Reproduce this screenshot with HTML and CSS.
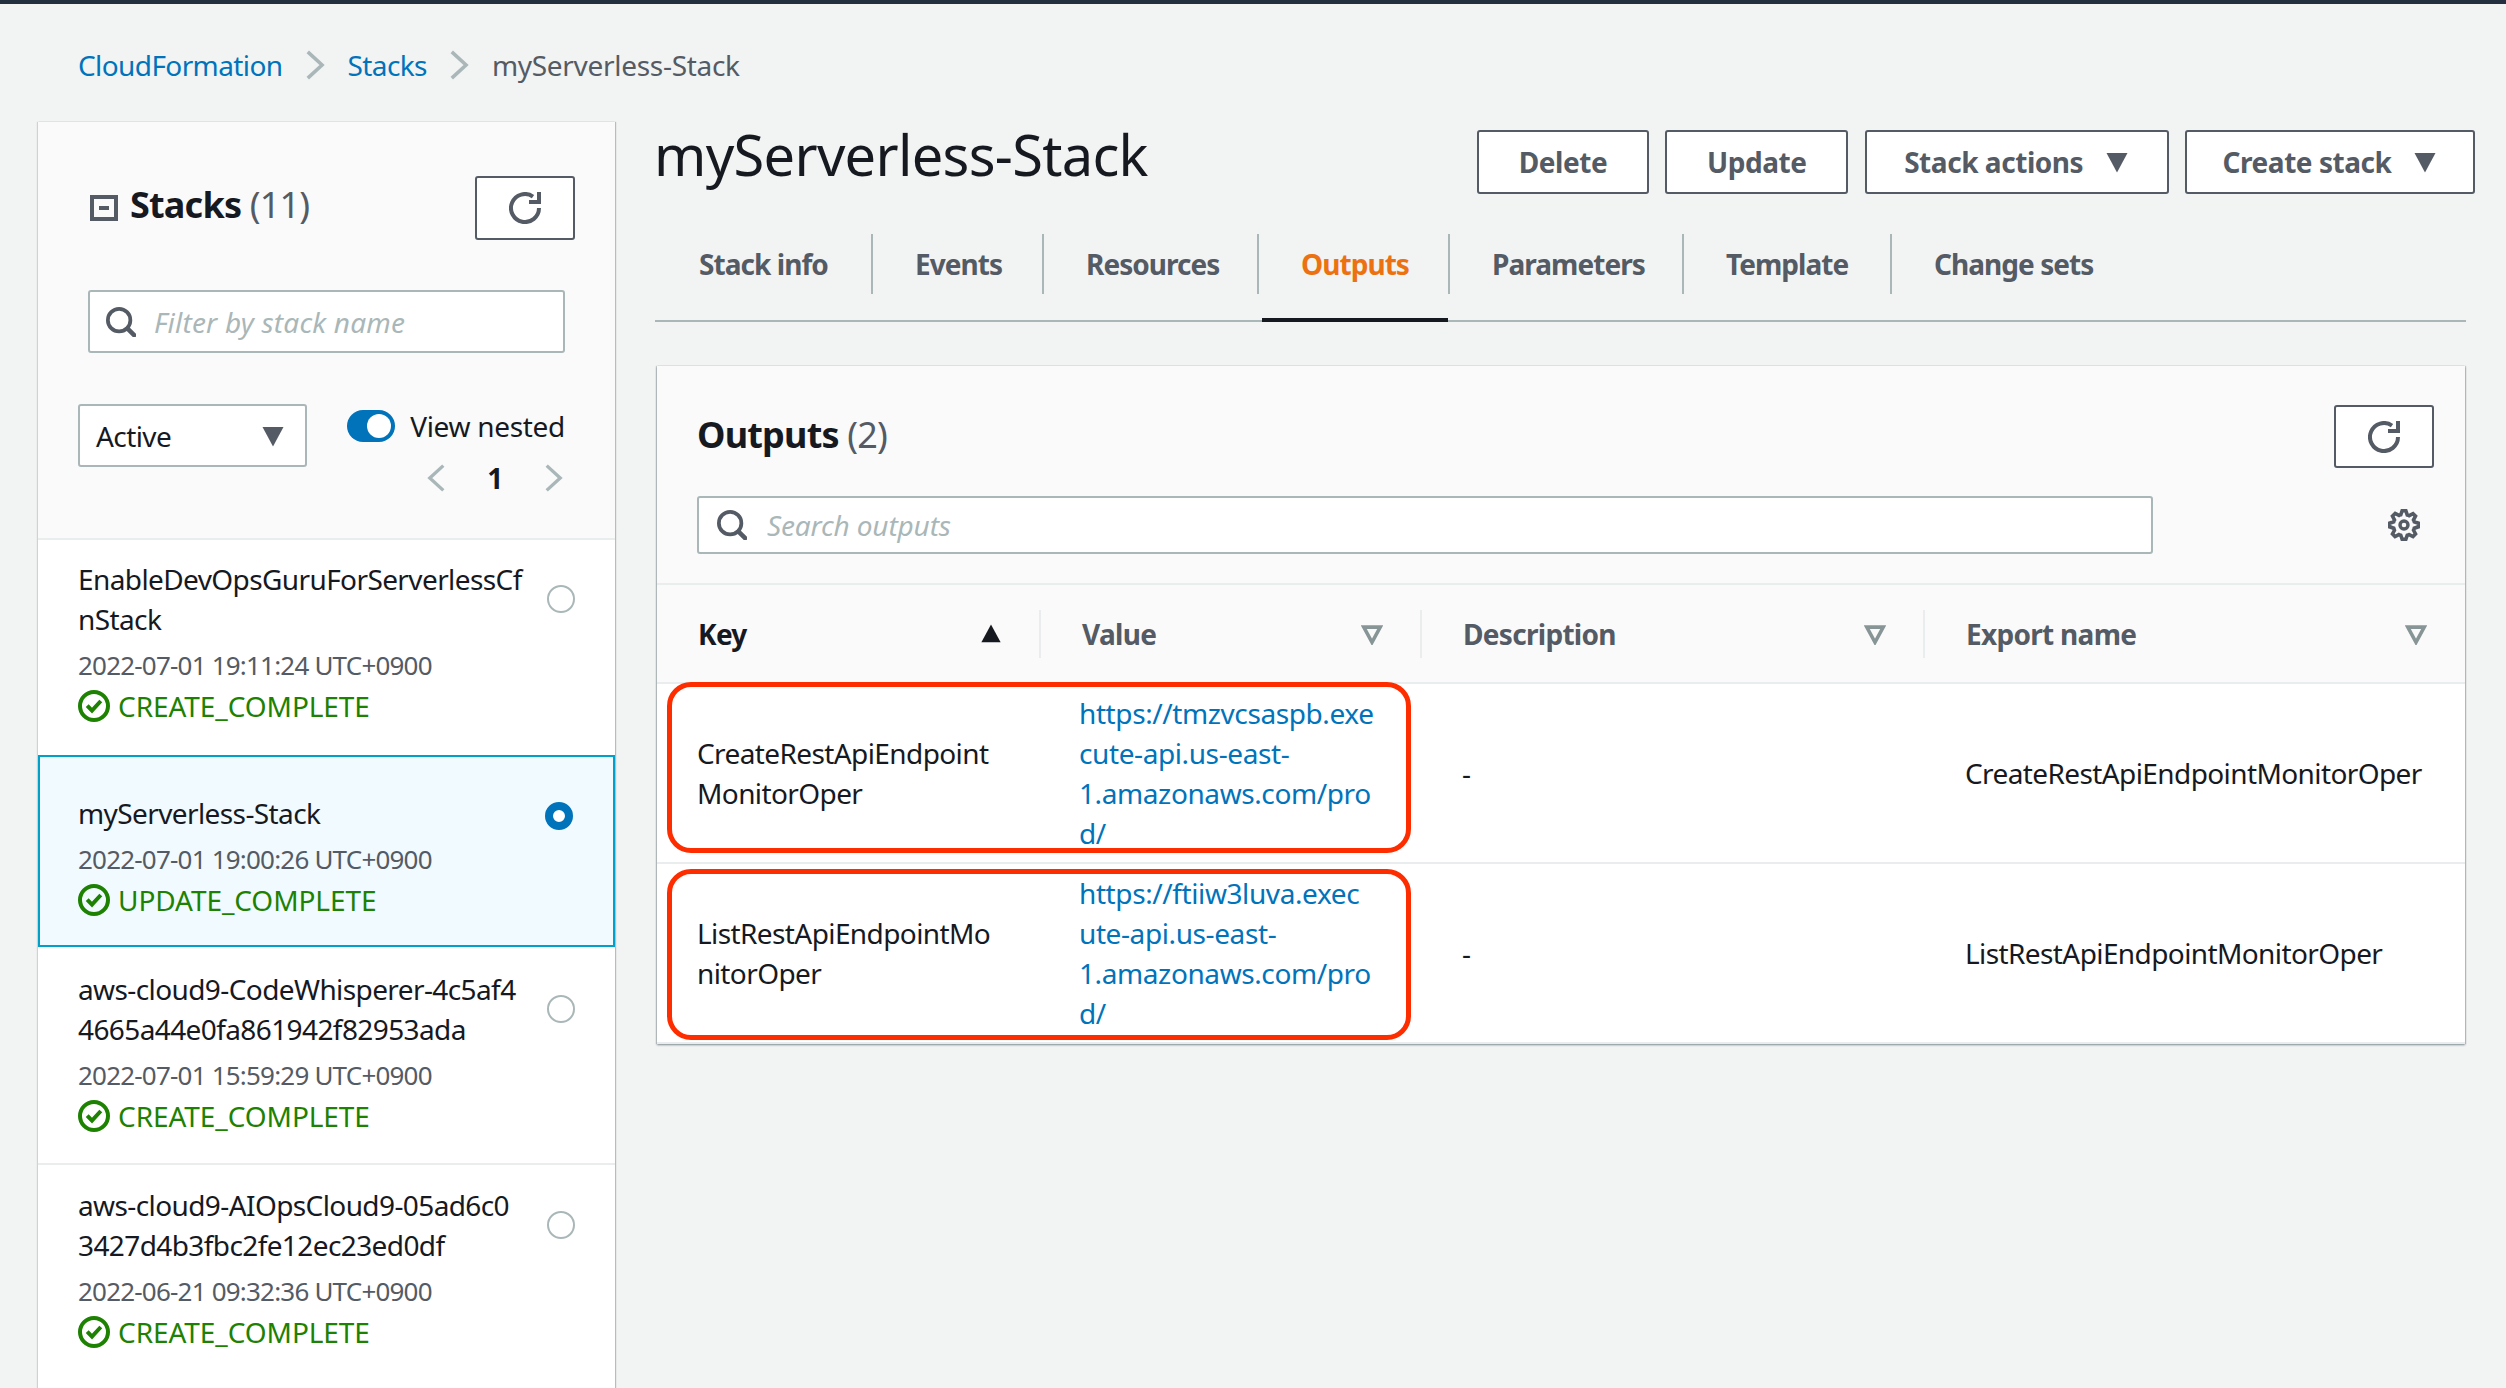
FILE: index.html
```html
<!DOCTYPE html>
<html lang="en">
<head>
    <meta charset="UTF-8">
    <meta name="viewport" content="width=device-width, initial-scale=1.0">
    <title>myServerless-Stack</title>
    <link rel="stylesheet" href="styles.css">
</head>
<body>

<svg class="defs" width="0" height="0">
    <symbol id="i-refresh" viewBox="0 0 16 16"><path d="M10 5h5V0M15 8a7 7 0 1 1-3-5.73" fill="none" stroke="currentColor" stroke-width="2"/></symbol>
    <symbol id="i-search" viewBox="0 0 16 16"><circle cx="7" cy="7" r="6" fill="none" stroke="currentColor" stroke-width="2"/><path d="M11.5 11.5L15 15" fill="none" stroke="currentColor" stroke-width="2.4" stroke-linecap="round"/></symbol>
    <symbol id="i-gear" viewBox="0 0 16 16"><path d="M13.3 5.2l1.1-2.1L13 1.7l-2.1 1.1c-.3-.2-.7-.3-1.1-.4L9 0H7l-.8 2.3c-.3.1-.7.2-1 .4L3.1 1.6 1.6 3.1l1.1 2.1c-.2.3-.3.7-.4 1L0 7v2l2.3.8c.1.4.3.7.4 1.1l-1.1 2.1 1.4 1.4 2.1-1.1c.3.2.7.3 1.1.4L7 16h2l.8-2.3c.4-.1.7-.3 1.1-.4l2.1 1.1 1.4-1.4-1.1-2.1c.2-.3.3-.7.4-1.1L16 9V7l-2.3-.8c-.1-.3-.2-.7-.4-1z" fill="none" stroke="currentColor" stroke-width="2" transform="translate(.8 .8) scale(.9)"/><circle cx="8" cy="8" r="2" fill="none" stroke="currentColor" stroke-width="1.7"/></symbol>
    <symbol id="i-check" viewBox="0 0 16 16"><circle cx="8" cy="8" r="7" fill="none" stroke="currentColor" stroke-width="2"/><path d="M4.6 7.8l2.4 2.5 4.4-4.8" fill="none" stroke="currentColor" stroke-width="2"/></symbol>
    <symbol id="i-caret" viewBox="0 0 16 16"><path d="M1 2h14L8 15z" fill="currentColor"/></symbol>
    <symbol id="i-chev-right" viewBox="0 0 16 24"><path d="M1.5 1l12 11-12 11" fill="none" stroke="currentColor" stroke-width="3"/></symbol>
    <symbol id="i-chev-left" viewBox="0 0 16 24"><path d="M14.5 1l-12 11 12 11" fill="none" stroke="currentColor" stroke-width="3"/></symbol>
</svg>

<div class="topbar"></div>

<nav class="breadcrumb">
    <a href="#">CloudFormation</a>
    <svg class="crumb-sep"><use href="#i-chev-right"/></svg>
    <a href="#">Stacks</a>
    <svg class="crumb-sep"><use href="#i-chev-right"/></svg>
    <span class="crumb-current">myServerless-Stack</span>
</nav>

<div class="layout">

    <aside class="stacks-panel">
        <div class="panel-head">
            <div class="panel-title-row">
                <span class="collapse-box"></span>
                <h2 class="panel-title">Stacks <span class="count">(11)</span></h2>
                <button class="icon-btn"><svg><use href="#i-refresh"/></svg></button>
            </div>
            <div class="search filter-input">
                <svg><use href="#i-search"/></svg>
                <span>Filter by stack name</span>
            </div>
            <div class="panel-controls">
                <div class="select">Active <svg><use href="#i-caret"/></svg></div>
                <div class="nested-col">
                    <div class="nested-row"><span class="toggle"></span><span class="nested-label">View nested</span></div>
                    <div class="pager">
                        <svg><use href="#i-chev-left"/></svg>
                        <b>1</b>
                        <svg><use href="#i-chev-right"/></svg>
                    </div>
                </div>
            </div>
        </div>

        <div class="stack-item two-line">
            <div class="stack-text">
                <div class="stack-name">EnableDevOpsGuruForServerlessCf<br>nStack</div>
                <div class="stack-date">2022-07-01 19:11:24 UTC+0900</div>
                <div class="stack-status"><svg><use href="#i-check"/></svg>CREATE_COMPLETE</div>
            </div>
            <span class="radio"></span>
        </div>
        <div class="stack-item selected">
            <div class="stack-text">
                <div class="stack-name">myServerless-Stack</div>
                <div class="stack-date">2022-07-01 19:00:26 UTC+0900</div>
                <div class="stack-status"><svg><use href="#i-check"/></svg>UPDATE_COMPLETE</div>
            </div>
            <span class="radio"></span>
        </div>
        <div class="stack-item two-line">
            <div class="stack-text">
                <div class="stack-name">aws-cloud9-CodeWhisperer-4c5af4<br>4665a44e0fa861942f82953ada</div>
                <div class="stack-date">2022-07-01 15:59:29 UTC+0900</div>
                <div class="stack-status"><svg><use href="#i-check"/></svg>CREATE_COMPLETE</div>
            </div>
            <span class="radio"></span>
        </div>
        <div class="stack-item two-line">
            <div class="stack-text">
                <div class="stack-name">aws-cloud9-AIOpsCloud9-05ad6c0<br>3427d4b3fbc2fe12ec23ed0df</div>
                <div class="stack-date">2022-06-21 09:32:36 UTC+0900</div>
                <div class="stack-status"><svg><use href="#i-check"/></svg>CREATE_COMPLETE</div>
            </div>
            <span class="radio"></span>
        </div>
    </aside>

    <main class="content">
        <div class="page-head">
            <h1>myServerless-Stack</h1>
            <div class="actions">
                <button class="btn">Delete</button>
                <button class="btn">Update</button>
                <button class="btn">Stack actions <svg><use href="#i-caret"/></svg></button>
                <button class="btn">Create stack <svg><use href="#i-caret"/></svg></button>
            </div>
        </div>

        <div class="tabs">
            <div class="tab">Stack info</div>
            <div class="tab">Events</div>
            <div class="tab">Resources</div>
            <div class="tab active">Outputs</div>
            <div class="tab">Parameters</div>
            <div class="tab">Template</div>
            <div class="tab">Change sets</div>
        </div>

        <section class="card">
            <div class="card-head">
                <div class="card-title-row">
                    <h2 class="card-title">Outputs <span class="count">(2)</span></h2>
                    <button class="icon-btn"><svg><use href="#i-refresh"/></svg></button>
                </div>
                <div class="card-search-row">
                    <div class="search output-search">
                        <svg><use href="#i-search"/></svg>
                        <span>Search outputs</span>
                    </div>
                    <svg class="gear"><use href="#i-gear"/></svg>
                </div>
            </div>

            <div class="table-row table-head">
                <div class="th"><span>Key</span><svg class="sort-on"><use href="#i-caret"/></svg></div>
                <div class="th"><span>Value</span><svg class="sort-off" viewBox="0 0 16 16"><path d="M2 3h12L8 14z"/></svg></div>
                <div class="th"><span>Description</span><svg class="sort-off" viewBox="0 0 16 16"><path d="M2 3h12L8 14z"/></svg></div>
                <div class="th last"><span>Export name</span><svg class="sort-off" viewBox="0 0 16 16"><path d="M2 3h12L8 14z"/></svg></div>
            </div>

            <div class="table-row body-row">
                <div class="td">CreateRestApiEndpoint<br>MonitorOper</div>
                <div class="td td-link"><a href="#">https://tmzvcsaspb.exe<br>cute-api.us-east-<br>1.amazonaws.com/pro<br>d/</a></div>
                <div class="td">-</div>
                <div class="td">CreateRestApiEndpointMonitorOper</div>
                <div class="mark mark-first"></div>
            </div>
            <div class="table-row body-row">
                <div class="td">ListRestApiEndpointMo<br>nitorOper</div>
                <div class="td td-link"><a href="#">https://ftiiw3luva.exec<br>ute-api.us-east-<br>1.amazonaws.com/pro<br>d/</a></div>
                <div class="td">-</div>
                <div class="td">ListRestApiEndpointMonitorOper</div>
                <div class="mark mark-second"></div>
            </div>
        </section>
    </main>
</div>

</body>
</html>
```

FILE: styles.css
```css
html, body {
    height: 100%;
}
body {
    margin: 0;
    height: 1388px;
    overflow: hidden;
    background-color: #f2f3f3;
    color: #16191f;
    font-family: "Noto Sans", "Open Sans", sans-serif;
    font-size: 28px;
    line-height: 40px;
    letter-spacing: -0.6px;
}
a {
    color: #0073bb;
    text-decoration: none;
}
h1, h2 {
    margin: 0;
}
button {
    font-family: inherit;
    letter-spacing: inherit;
}
.defs {
    display: block;
    height: 0;
}
.topbar {
    height: 4px;
    background-color: #232f3e;
}

/* breadcrumb */
.breadcrumb {
    display: flex;
    align-items: center;
    height: 40px;
    margin: 41px 0 37px 78px;
    color: #545b64;
}
.crumb-sep {
    width: 19px;
    height: 30px;
    margin: 0 23px;
    color: #aab7b8;
}
.crumb-current {
    letter-spacing: -0.3px;
}

.layout {
    display: flex;
    align-items: flex-start;
    margin-left: 38px;
}

/* left panel */
.stacks-panel {
    width: 577px;
    flex-shrink: 0;
    height: 1300px;
    background: #fff;
    box-shadow: 1px 0 1px rgba(0, 28, 36, 0.25), -1px 0 1px rgba(0, 28, 36, 0.15);
}
.panel-head {
    height: 416px;
    background: #fafafa;
    border-bottom: 2px solid #eaeded;
}
.panel-title-row {
    display: flex;
    align-items: center;
    padding: 54px 40px 0 52px;
}
.collapse-box {
    width: 28px;
    height: 26px;
    box-sizing: border-box;
    border: 4px solid #545b64;
    position: relative;
    margin-right: 12px;
}
.collapse-box::after {
    content: "";
    position: absolute;
    left: 5px;
    right: 5px;
    top: 7px;
    height: 4px;
    background: #545b64;
}
.panel-title {
    flex: 1;
    font-size: 36px;
    line-height: 44px;
    font-weight: 700;
    margin-top: -6px;
    letter-spacing: -0.8px;
}
.count {
    font-weight: 400;
    color: #545b64;
}
.icon-btn {
    width: 100px;
    height: 64px;
    padding: 0;
    background: #fff;
    border: 2px solid #545b64;
    border-radius: 3px;
    color: #545b64;
    display: flex;
    align-items: center;
    justify-content: center;
}
.icon-btn svg {
    width: 32px;
    height: 32px;
}
.search {
    display: flex;
    align-items: center;
    box-sizing: border-box;
    background: #fff;
    border: 2px solid #aab7b8;
    border-radius: 3px;
    color: #aab7b8;
    font-style: italic;
}
.search svg {
    width: 30px;
    height: 30px;
    color: #545b64;
    flex-shrink: 0;
}
.filter-input {
    height: 63px;
    margin: 50px 50px 0 50px;
    padding-left: 16px;
    letter-spacing: 0.2px;
}
.filter-input span {
    margin-left: 18px;
}
.panel-controls {
    display: flex;
    margin: 51px 50px 0 40px;
}
.select {
    display: flex;
    align-items: center;
    justify-content: space-between;
    box-sizing: border-box;
    width: 229px;
    height: 63px;
    padding: 0 20px 0 16px;
    background: #fff;
    border: 2px solid #aab7b8;
    border-radius: 3px;
}
.select svg {
    width: 24px;
    height: 24px;
    color: #545b64;
}
.nested-col {
    flex: 1;
    margin-left: 40px;
}
.nested-row {
    display: flex;
    align-items: center;
    justify-content: space-between;
    height: 44px;
}
.nested-label {
    letter-spacing: -0.3px;
}
.toggle {
    width: 48px;
    height: 32px;
    box-sizing: border-box;
    border-radius: 16px;
    background: #0073bb;
    position: relative;
}
.toggle::after {
    content: "";
    position: absolute;
    top: 4px;
    right: 4px;
    width: 24px;
    height: 24px;
    border-radius: 50%;
    background: #fff;
}
.pager {
    display: flex;
    align-items: center;
    justify-content: flex-end;
    height: 40px;
    margin-top: 10px;
    margin-right: 2px;
}
.pager svg {
    width: 18px;
    height: 30px;
    color: #aab7b8;
}
.pager b {
    width: 100px;
    text-align: center;
}

/* stack list */
.stack-item {
    display: flex;
    justify-content: space-between;
    box-sizing: border-box;
    padding: 21px 40px 0 40px;
    position: relative;
}
.two-line {
    height: 215px;
    padding-top: 19px;
}
.two-line + .two-line {
    border-top: 2px solid #eaeded;
}
.stack-item.selected {
    height: 192px;
    padding: 36px 38px 0 38px;
    background: #f1faff;
    border: 2px solid #00a1c9;
}
.stack-item.selected + .two-line {
    height: 216px;
    padding-top: 22px;
}
.stack-item:last-child {
    height: 216px;
    padding-top: 20px;
}
.stack-date {
    margin-top: 6px;
    color: #545b64;
    font-size: 26px;
    letter-spacing: -0.8px;
}
.stack-status {
    display: flex;
    align-items: center;
    margin-top: 1px;
    color: #1d8102;
    letter-spacing: -0.07px;
}
.stack-status svg {
    width: 32px;
    height: 32px;
    margin-right: 8px;
}
.radio {
    flex-shrink: 0;
    width: 28px;
    height: 28px;
    box-sizing: border-box;
    margin-top: 26px;
    border: 2px solid #aab7b8;
    border-radius: 50%;
    background: #fff;
}
.selected .radio {
    margin-top: 9px;
    margin-right: 2px;
    border: 8px solid #0073bb;
}

/* right column */
.content {
    width: 1820px;
    margin-left: 40px;
}
.page-head {
    display: flex;
    justify-content: space-between;
    align-items: center;
    height: 64px;
    margin-top: 8px;
}
.page-head h1 {
    font-size: 56px;
    line-height: 64px;
    font-weight: 400;
    letter-spacing: -0.7px;
    margin: 0 0 16px -1px;
}
.actions {
    display: grid;
    grid-template-columns: 172px 183px 304px 290px;
    gap: 16.33px;
}
.btn {
    display: flex;
    align-items: center;
    justify-content: center;
    gap: 22px;
    height: 64px;
    padding: 0;
    background: #fff;
    border: 2px solid #545b64;
    border-radius: 3px;
    color: #545b64;
    font-size: 28px;
    font-weight: 700;
    letter-spacing: -0.45px;
}
.btn svg {
    width: 24px;
    height: 24px;
}

/* tabs */
.tabs {
    display: grid;
    grid-template-columns: 218px 171px 215px 191px 234px 208px auto;
    align-items: start;
    height: 86px;
    margin-top: 40px;
    margin-right: 9px;
    border-bottom: 2px solid #aab7b8;
    letter-spacing: -0.95px;
}
.tab {
    box-sizing: border-box;
    height: 60px;
    padding-left: 42px;
    border-right: 2px solid #aab7b8;
    color: #545b64;
    font-weight: 700;
    line-height: 60px;
    position: relative;
}
.tab:first-child {
    padding-left: 44px;
}
.tab:last-child {
    border-right: none;
}
.tab.active {
    color: #ec7211;
}
.tab.active::after {
    content: "";
    position: absolute;
    left: 3px;
    right: 0;
    top: 84px;
    height: 4px;
    background: #16191f;
}

/* outputs card */
.card {
    width: 1808px;
    margin: 44px 0 0 2px;
    background: #fff;
    box-shadow: 0 1px 2px rgba(0, 28, 36, 0.45), 1px 0 1px rgba(0, 28, 36, 0.15), -1px 0 1px rgba(0, 28, 36, 0.15);
}
.card-head {
    height: 219px;
    padding: 39px 31px 0 40px;
    box-sizing: border-box;
    background: #fafafa;
    border-bottom: 2px solid #eaeded;
}
.card-title-row {
    display: flex;
    justify-content: space-between;
    align-items: center;
}
.card-title {
    font-size: 36px;
    line-height: 44px;
    font-weight: 700;
    margin-top: -4px;
    letter-spacing: -0.8px;
}
.card .icon-btn {
    height: 63px;
}
.card-search-row {
    display: flex;
    justify-content: space-between;
    align-items: center;
    margin-top: 28px;
}
.output-search {
    width: 1456px;
    height: 58px;
    padding-left: 18px;
    letter-spacing: -0.15px;
}
.output-search span {
    margin-left: 20px;
}
.gear {
    width: 32px;
    height: 32px;
    color: #545b64;
    margin-right: 14px;
}
.table-row {
    display: grid;
    grid-template-columns: 384px 381px 503px 540px;
    align-items: center;
    position: relative;
}
.table-head {
    height: 97px;
    background: #fafafa;
    border-bottom: 2px solid #eaeded;
}
.th {
    display: flex;
    align-items: center;
    justify-content: space-between;
    box-sizing: border-box;
    height: 48px;
    padding: 0 37px 0 41px;
    border-right: 2px solid #eaeded;
    color: #545b64;
    font-weight: 700;
    letter-spacing: -0.7px;
}
.th:first-child {
    color: #16191f;
}
.th.last {
    border-right: none;
    padding-right: 38px;
}
.sort-on {
    width: 22px;
    height: 22px;
    color: #16191f;
    transform: rotate(180deg);
}
.sort-off {
    width: 22px;
    height: 22px;
    fill: none;
    stroke: #879596;
    stroke-width: 2.6;
}
.body-row {
    height: 178px;
    border-bottom: 2px solid #eaeded;
}
.td {
    padding-left: 40px;
}
.td-link {
    padding-left: 38px;
    letter-spacing: -0.4px;
}
.mark {
    position: absolute;
    left: 10px;
    width: 744px;
    height: 171px;
    box-sizing: border-box;
    border: 5px solid #fe2d00;
    border-radius: 24px;
}
.mark-first {
    top: -2px;
}
.mark-second {
    top: 5px;
}
```
